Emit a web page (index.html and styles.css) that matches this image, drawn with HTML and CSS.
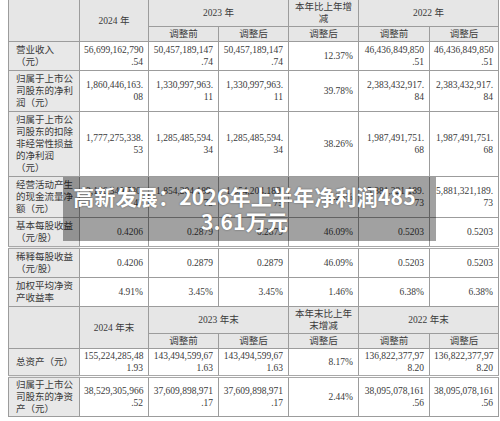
FILE: index.html
```html
<!DOCTYPE html>
<html lang="zh-CN">
<head>
  <meta charset="UTF-8">
  <meta name="viewport" content="width=device-width, initial-scale=1.0">
  <title>高新发展 2026年半年报</title>
  <link rel="stylesheet" href="styles.css">
</head>
<body>
<div class="page">
  <table class="report">
    <colgroup>
      <col class="c-label"><col class="c-a"><col class="c-b"><col class="c-b"><col class="c-b"><col class="c-c"><col class="c-a">
    </colgroup>
    <tr class="head">
      <td rowspan="2"></td>
      <td rowspan="2">2024 年</td>
      <td colspan="2">2023 年</td>
      <td>本年比上年增<br>减</td>
      <td colspan="2">2022 年</td>
    </tr>
    <tr class="head">
      <td>调整前</td><td>调整后</td><td>调整后</td><td>调整前</td><td>调整后</td>
    </tr>
    <tr>
      <td class="label">营业收入<br>（元）</td>
      <td>56,699,162,790<br>.54</td>
      <td>50,457,189,147<br>.74</td>
      <td>50,457,189,147<br>.74</td>
      <td>12.37%</td>
      <td>46,436,849,850<br>.51</td>
      <td>46,436,849,850<br>.51</td>
    </tr>
    <tr>
      <td class="label">归属于上市公<br>司股东的净利<br>润（元）</td>
      <td>1,860,446,163.<br>08</td>
      <td>1,330,997,963.<br>11</td>
      <td>1,330,997,963.<br>11</td>
      <td>39.78%</td>
      <td>2,383,432,917.<br>84</td>
      <td>2,383,432,917.<br>84</td>
    </tr>
    <tr>
      <td class="label">归属于上市公<br>司股东的扣除<br>非经常性损益<br>的净利润<br>（元）</td>
      <td>1,777,275,338.<br>53</td>
      <td>1,285,485,594.<br>34</td>
      <td>1,285,485,594.<br>34</td>
      <td>38.26%</td>
      <td>1,987,491,751.<br>68</td>
      <td>1,987,491,751.<br>68</td>
    </tr>
    <tr>
      <td class="label">经营活动产生<br>的现金流量净<br>额（元）</td>
      <td>3,156,340,780.<br>47</td>
      <td>1,854,204,189.<br>75</td>
      <td>1,854,204,189.<br>75</td>
      <td>70.23%</td>
      <td>5,881,321,189.<br>73</td>
      <td>5,881,321,189.<br>73</td>
    </tr>
    <tr>
      <td class="label">基本每股收益<br>（元/股）</td>
      <td>0.4206</td><td>0.2879</td><td>0.2879</td><td>46.09%</td><td>0.5203</td><td>0.5203</td>
    </tr>
    <tr class="split">
      <td class="label">稀释每股收益<br>（元/股）</td>
      <td>0.4206</td><td>0.2879</td><td>0.2879</td><td>46.09%</td><td>0.5203</td><td>0.5203</td>
    </tr>
    <tr>
      <td class="label">加权平均净资<br>产收益率</td>
      <td>4.91%</td><td>3.45%</td><td>3.45%</td><td>1.46%</td><td>6.38%</td><td>6.38%</td>
    </tr>
    <tr class="head">
      <td rowspan="2"></td>
      <td rowspan="2">2024 年末</td>
      <td colspan="2">2023 年末</td>
      <td>本年末比上年<br>末增减</td>
      <td colspan="2">2022 年末</td>
    </tr>
    <tr class="head">
      <td>调整前</td><td>调整后</td><td>调整后</td><td>调整前</td><td>调整后</td>
    </tr>
    <tr class="tight">
      <td class="label">总资产（元）</td>
      <td>155,224,285,48<br>1.93</td>
      <td>143,494,599,67<br>1.63</td>
      <td>143,494,599,67<br>1.63</td>
      <td>8.17%</td>
      <td>136,822,377,97<br>8.20</td>
      <td>136,822,377,97<br>8.20</td>
    </tr>
    <tr class="split tight">
      <td class="label">归属于上市公<br>司股东的净资<br>产（元）</td>
      <td>38,529,305,966<br>.52</td>
      <td>37,609,898,971<br>.17</td>
      <td>37,609,898,971<br>.17</td>
      <td>2.44%</td>
      <td>38,095,078,161<br>.56</td>
      <td>38,095,078,161<br>.56</td>
    </tr>
  </table>

  <div class="headline">
    <span>高新发展：2026年上半年净利润485<br>3.61万元</span>
  </div>
</div>
</body>
</html>
```

FILE: styles.css
```css
body {
  margin: 0;
  background: #fff;
}
.page {
  position: relative;
  width: 500px;
  height: 421px;
  overflow: hidden;
}
.report {
  margin: -1px 0 0 8px;
  width: 490px;
  table-layout: fixed;
  border-collapse: collapse;
  font-family: 'Liberation Serif', 'Noto Sans CJK SC', serif;
  font-size: 9.5px;
  line-height: 12px;
  color: #3a3a3a;
}
.c-label { width: 71px; }
.c-a { width: 69px; }
.c-b { width: 70px; }
.c-c { width: 71px; }
.report td {
  border: 1px solid #9c9c9c;
  padding: 2px 5px 2px 4px;
  text-align: right;
  vertical-align: middle;
  white-space: nowrap;
}
.report .head td {
  background: #e6e6e6;
  text-align: center;
  padding: 1px 3px;
}
.report td.label {
  background: #e8e8e8;
  text-align: left;
  padding-left: 7px;
}
.report tr.tight td {
  padding-top: 1px;
  padding-bottom: 1px;
}
.report tr.split td {
  border-top: 3px double #a8a8a8;
}
.headline {
  position: absolute;
  left: 63px;
  top: 177px;
  width: 373px;
  height: 64px;
  background: rgba(0, 0, 0, 0.37);
  display: flex;
  align-items: center;
  justify-content: center;
  padding-right: 10px;
  box-sizing: border-box;
}
.headline span {
  font-family: 'Noto Sans CJK SC', 'Noto Sans', sans-serif;
  font-weight: 700;
  font-size: 21px;
  line-height: 25px;
  color: #fff;
  text-align: center;
  text-shadow: 0 0 2px rgba(0, 0, 0, 0.45);
  letter-spacing: 0.2px;
}
```
